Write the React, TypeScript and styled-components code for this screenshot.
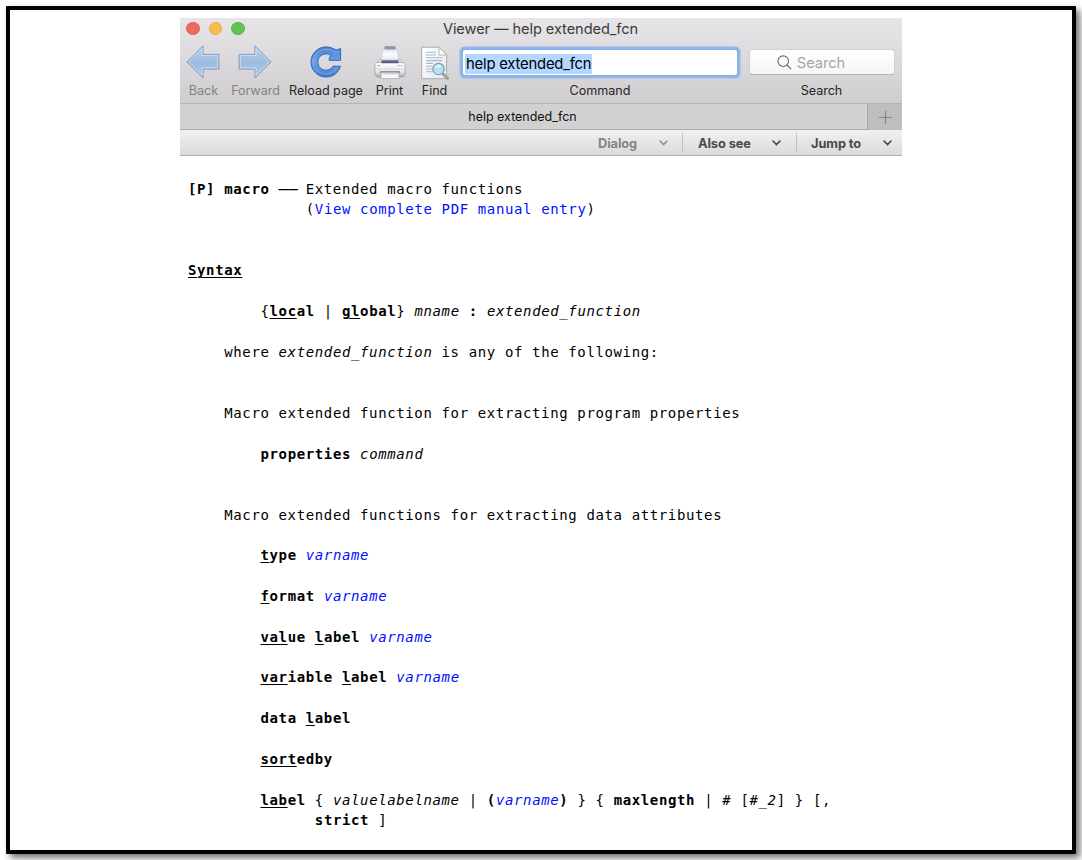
import React from "react";
import styled, { createGlobalStyle } from "styled-components";

const Global = createGlobalStyle`
  * { box-sizing: border-box; }
  html, body { margin: 0; background: #fff; overflow: hidden; }
`;

const Page = styled.div`
  width: 1082px;
  height: 860px;
  padding: 6px;
`;

const Frame = styled.div`
  width: 1070px;
  height: 848px;
  border: 4px solid #000;
  border-radius: 1px;
  background: #fff;
  box-shadow: 4px 4px 7px rgba(0, 0, 0, 0.55);
  padding: 8px 0 0 170px;
`;

const Window = styled.div`
  width: 722px;
  font-family: Inter, "Liberation Sans", sans-serif;
  color: #262626;
`;

const Chrome = styled.div`
  height: 86px;
  background: linear-gradient(#e7e5e7, #cfcdcf);
  border-bottom: 1px solid #b5b4b5;
`;

const TitleBar = styled.div`
  height: 22px;
  display: grid;
  grid-template-columns: 76px 1fr 76px;
  align-items: center;
`;

const Lights = styled.div`
  display: flex;
  gap: 9px;
  padding: 0 0 1px 6px;
`;

const Light = styled.span<{ $fill: string; $edge: string }>`
  width: 13.6px;
  height: 13.6px;
  border-radius: 50%;
  background: ${(p) => p.$fill};
  border: 1px solid ${(p) => p.$edge};
`;

const Title = styled.div`
  text-align: center;
  font-size: 14.6px;
  letter-spacing: -0.08px;
  padding-right: 1px;
  color: #3b3a3b;
  white-space: nowrap;
`;

const Toolbar = styled.div`
  display: grid;
  grid-template-columns: 47px 57px 84px 43px 47px 284px 159px;
  padding-top: 4px;
`;

const Tool = styled.div`
  display: flex;
  flex-direction: column;
  align-items: center;
`;

const Slot = styled.div<{ $lift?: number; $shift?: number }>`
  height: 38px;
  display: flex;
  align-items: center;
  justify-content: center;
  padding-bottom: ${(p) => p.$lift ?? 0}px;
  padding-right: ${(p) => p.$shift ?? 0}px;
`;

const Label = styled.div<{ $dim?: boolean }>`
  height: 17px;
  line-height: 17px;
  font-size: 12.6px;
  letter-spacing: -0.04px;
  white-space: nowrap;
  color: ${(p) => (p.$dim ? "#838283" : "#262626")};
`;

const CommandField = styled.div`
  width: 274px;
  height: 25px;
  border-radius: 2px;
  background: #fff;
  box-shadow: 0 0 0 1px #84afe6, 0 0 0 3.5px #92b8e9;
  display: flex;
  align-items: center;
  padding: 2px 0 0 2px;
`;

const Selection = styled.span`
  background: #b3d7ff;
  color: #000;
  font-size: 14.8px;
  line-height: 20px;
  letter-spacing: -0.19px;
  padding: 0 1px;
  white-space: nowrap;
`;

const SearchField = styled.div`
  width: 146px;
  height: 26px;
  border-radius: 4px;
  border: 1px solid #d2d1d2;
  border-bottom-color: #b7b6b7;
  background: linear-gradient(#fff, #f5f5f5);
  display: flex;
  align-items: center;
  justify-content: center;
  gap: 5px;
  padding: 1px 21px 0 0;
  font-size: 14.6px;
  color: #a6a6a6;
`;

const TabBar = styled.div`
  height: 26px;
  display: grid;
  grid-template-columns: 687px 35px;
  background: #d1d1d1;
  border-bottom: 1px solid #acacac;
`;

const Tab = styled.div`
  text-align: center;
  line-height: 26px;
  font-size: 12.5px;
  letter-spacing: -0.02px;
  padding-right: 2px;
  color: #111;
`;

const AddTab = styled.div`
  background: #bebebe;
  border-left: 1px solid #a8a8a8;
  display: flex;
  align-items: center;
  justify-content: center;
  padding-left: 1px;
`;

const MenuBar = styled.div`
  height: 26px;
  display: grid;
  grid-template-columns: 401px 101px 114px 106px;
  align-items: center;
  background: linear-gradient(#f0f0f0, #dbdbdb);
  border-bottom: 1px solid #b1b1b1;
`;

const Menu = styled.div<{ $dim?: boolean; $start: number; $end: number }>`
  height: 19px;
  display: flex;
  align-items: center;
  justify-content: space-between;
  padding: 1px ${(p) => p.$end}px 0 ${(p) => p.$start}px;
  border-left: ${(p) => (p.$dim ? "0" : "1px solid #c1c1c1")};
  font-size: 12.8px;
  font-weight: 700;
  letter-spacing: -0.08px;
  color: ${(p) => (p.$dim ? "#858585" : "#4a4a4a")};
`;

const Doc = styled.div`
  padding: 22.8px 0 0 8px;
  font-family: "DejaVu Sans Mono", "Liberation Mono", monospace;
  font-size: 14px;
  letter-spacing: 0.625px;
  line-height: 20.37px;
  color: #000;
`;

const Row = styled.div<{ $col?: number; $gap?: number }>`
  white-space: pre;
  height: 20.37px;
  padding-left: ${(p) => (p.$col ?? 0) * 9.06}px;
  margin-top: ${(p) => (p.$gap ?? 0) * 20.37}px;
`;

const U = styled.span`
  text-decoration: underline;
  text-decoration-thickness: 1px;
  text-underline-offset: 2px;
`;

const Link = styled.span`
  color: #0010ff;
`;

const Dash = styled.span`
  display: inline-block;
  width: 18.12px;
  height: 20px;
  line-height: 22px;
  vertical-align: top;
  letter-spacing: 0;
  font-family: "Liberation Mono", monospace;
  font-size: 16px;
`;

const Arrow = ({ flip, id }: { flip?: boolean; id: string }) => (
  <svg width="36" height="36" viewBox="0 0 36 36">
    <defs>
      <linearGradient id={id} x1="0" y1="0" x2="0" y2="1">
        <stop offset="0" stopColor="#c0d2e8" />
        <stop offset="0.5" stopColor="#9ebbdf" />
        <stop offset="1" stopColor="#aec8e7" />
      </linearGradient>
    </defs>
    <g transform={flip ? "translate(36 0) scale(-1 1)" : undefined}>
      <path d="M2.6 18.8 18.5 2.8V11H34.4V26H18.5V34.8Z" fill="#8b94a2" opacity="0.35" />
      <path d="M2 17.8 18 1.8V10.4H33.8V25H18V34Z" fill={`url(#${id})`} stroke="#7f9fc9" strokeWidth="1" strokeLinejoin="round" />
      <path d="M3.6 17.8 17 4.4V11.5H32.7V23.9H17V31.3Z" fill="none" stroke="#cfdef0" strokeWidth="0.9" />
    </g>
  </svg>
);

const Reload = () => (
  <svg width="34" height="34" viewBox="0 0 34 34">
    <defs>
      <linearGradient id="reload" x1="0" y1="0" x2="0" y2="1">
        <stop offset="0" stopColor="#4b80d2" />
        <stop offset="0.5" stopColor="#6fa1e8" />
        <stop offset="1" stopColor="#4179d0" />
      </linearGradient>
    </defs>
    <path
      d="M27 5.2 31.6 3.6V15.3H20.2V12.4L22.4 11C20.6 9.3 18.6 8.8 16.8 8.9C12 9.1 8.9 12.6 8.9 17C8.9 21.6 12.2 25.2 16.8 25.2C20 25.2 22.6 23.7 24 21.2H31.4C29.6 27.9 24 32 17 32C8.6 32 2 25.4 2 17C2 8.5 8.7 2 17 2C21 2 24.3 3.2 27 5.2Z"
      fill="url(#reload)"
      stroke="#2f66bd"
      strokeWidth="1"
      strokeLinejoin="round"
    />
    <path d="M4.4 19.5C3.4 10 10.3 4.4 17 4.4C21 4.4 24.6 5.6 27 7.8L30.2 6M6.6 23.5C11 30.4 22.4 31.2 28 23.4" fill="none" stroke="#9cc0f2" strokeWidth="1" opacity="0.6" />
  </svg>
);

const Printer = () => (
  <svg width="32" height="35" viewBox="0 0 32 35">
    <defs>
      <linearGradient id="body" x1="0" y1="0" x2="0" y2="1">
        <stop offset="0" stopColor="#fff" />
        <stop offset="0.6" stopColor="#e9eaed" />
        <stop offset="1" stopColor="#a8aaaf" />
      </linearGradient>
      <linearGradient id="slot" x1="0" y1="0" x2="0" y2="1">
        <stop offset="0" stopColor="#8c95a8" />
        <stop offset="1" stopColor="#4a536c" />
      </linearGradient>
      <linearGradient id="sheet" x1="0" y1="0" x2="0" y2="1">
        <stop offset="0" stopColor="#e4e9f3" />
        <stop offset="0.4" stopColor="#f8faff" />
        <stop offset="1" stopColor="#e6ebf6" />
      </linearGradient>
    </defs>
    <path d="M10.5 1.2H21.5V5H10.5Z" fill="#8f96a9" />
    <path d="M5 14.5H27L28.5 18.5H3.5Z" fill="#e0e2e7" stroke="#a7a9b0" strokeWidth="0.5" />
    <path d="M8 13.5H24L25 18H7Z" fill="url(#slot)" />
    <path d="M8.2 4.6H23.8L24.4 15H7.6Z" fill="url(#sheet)" stroke="#b4bac8" strokeWidth="0.5" />
    <path d="M4 17.5H28C30.2 17.5 31 19 31 21V29Q31 32 28 32H4Q1 32 1 29V21C1 19 1.8 17.5 4 17.5Z" fill="url(#body)" stroke="#9a9ca2" strokeWidth="0.7" />
    <path d="M7.5 17.6H24.5" stroke="#525b76" strokeWidth="1.3" />
    <path d="M2 24H30" stroke="#c3c5cb" strokeWidth="0.7" />
    <path d="M3.4 20.6H6.2" stroke="#ee9a3c" strokeWidth="1.2" />
    <path d="M23.5 20.6H28.5" stroke="#9b9eaa" strokeWidth="1" strokeDasharray="1 1" />
    <path d="M6 27H26" stroke="#5b5c62" strokeWidth="1.2" />
    <path d="M7.6 27.4H24.4L25.2 33.5H6.8Z" fill="#f7f7f8" stroke="#a9abb0" strokeWidth="0.7" />
    <path d="M8.5 28.8H23.5" stroke="#cccdd1" strokeWidth="1.2" />
  </svg>
);

const FindIcon = () => (
  <svg width="32" height="36" viewBox="0 0 32 36">
    <defs>
      <linearGradient id="paper" x1="0" y1="0" x2="1" y2="1">
        <stop offset="0" stopColor="#fff" />
        <stop offset="1" stopColor="#e6e8eb" />
      </linearGradient>
    </defs>
    <path d="M2.7 2.2H20L27.6 10V33.7H2.7Z" fill="url(#paper)" stroke="#a3a5a9" strokeWidth="0.9" />
    <path d="M20 2.2V10H27.6Z" fill="#fafafa" stroke="#a7a9ad" strokeWidth="0.8" />
    <path d="M7 7.2H17M7 10H17M7 12.8H23.5M7 15.6H23.5M7 18.4H14M7 21.2H13M7 24H13M7 26.8H14" stroke="#a6b8d8" strokeWidth="1.1" />
    <path d="M24 28.8 28.6 33.4" stroke="#85878b" strokeWidth="2.6" strokeLinecap="round" />
    <path d="M24.4 29 28.4 33" stroke="#c2c4c7" strokeWidth="1" strokeLinecap="round" />
    <circle cx="19.5" cy="24" r="5.7" fill="#b3def3" stroke="#8494a0" strokeWidth="1.1" />
    <path d="M15.8 22.5Q18.5 18.5 22.8 21.5Q20 23.5 15.8 22.5Z" fill="#e4f6fd" />
  </svg>
);

const Chevron = ({ color }: { color: string }) => (
  <svg width="9" height="6" viewBox="0 0 9 6">
    <path d="M1 1 4.5 4.5 8 1" fill="none" stroke={color} strokeWidth="1.6" strokeLinecap="round" />
  </svg>
);

const Var = () => <Link><i>varname</i></Link>;

export default function App() {
  return (
    <Page>
      <Global />
      <Frame>
        <Window>
          <Chrome>
            <TitleBar>
              <Lights>
                <Light $fill="#ee6a5f" $edge="#e26056" />
                <Light $fill="#f6be4f" $edge="#e5ae45" />
                <Light $fill="#5fc454" $edge="#54b449" />
              </Lights>
              <Title>Viewer — help extended_fcn</Title>
            </TitleBar>
            <Toolbar>
              <Tool><Slot $lift={2} $shift={1}><Arrow id="back" /></Slot><Label $dim>Back</Label></Tool>
              <Tool><Slot $lift={2} $shift={1}><Arrow id="forward" flip /></Slot><Label $dim>Forward</Label></Tool>
              <Tool><Slot $lift={2}><Reload /></Slot><Label>Reload page</Label></Tool>
              <Tool><Slot $lift={2}><Printer /></Slot><Label>Print</Label></Tool>
              <Tool><Slot><FindIcon /></Slot><Label>Find</Label></Tool>
              <Tool>
                <Slot $lift={1}><CommandField><Selection>help extended_fcn</Selection></CommandField></Slot>
                <Label>Command</Label>
              </Tool>
              <Tool>
                <Slot $lift={2}>
                  <SearchField>
                    <svg width="15" height="15" viewBox="0 0 15 15">
                      <circle cx="6.2" cy="6.2" r="5.3" fill="none" stroke="#6c6c6c" strokeWidth="1.1" />
                      <path d="M10 10 14.2 14.2" stroke="#6c6c6c" strokeWidth="1.2" />
                    </svg>
                    Search
                  </SearchField>
                </Slot>
                <Label>Search</Label>
              </Tool>
            </Toolbar>
          </Chrome>
          <TabBar>
            <Tab>help extended_fcn</Tab>
            <AddTab>
              <svg width="13" height="13" viewBox="0 0 13 13">
                <path d="M6.5 0V13M0 6.5H13" stroke="#858585" strokeWidth="1.1" />
              </svg>
            </AddTab>
          </TabBar>
          <MenuBar>
            <span />
            <Menu $dim $start={17} $end={14}>Dialog<Chevron color="#929292" /></Menu>
            <Menu $start={15} $end={15}>Also see<Chevron color="#484848" /></Menu>
            <Menu $start={14} $end={10}>Jump to<Chevron color="#484848" /></Menu>
          </MenuBar>
        </Window>
        <Doc>
          <Row><b>[P] macro</b> <Dash>——</Dash> Extended macro functions</Row>
          <Row $col={13}>(<Link>View complete PDF manual entry</Link>)</Row>
          <Row $gap={2}><b><U>Syntax</U></b></Row>
          <Row $gap={1} $col={8}>{"{"}<b><U>loc</U>al</b> | <b><U>gl</U>obal</b>{"} "}<i>mname</i> <b>:</b> <i>extended_function</i></Row>
          <Row $gap={1} $col={4}>where <i>extended_function</i> is any of the following:</Row>
          <Row $gap={2} $col={4}>Macro extended function for extracting program properties</Row>
          <Row $gap={1} $col={8}><b>properties</b> <i>command</i></Row>
          <Row $gap={2} $col={4}>Macro extended functions for extracting data attributes</Row>
          <Row $gap={1} $col={8}><b><U>t</U>ype</b> <Var /></Row>
          <Row $gap={1} $col={8}><b><U>f</U>ormat</b> <Var /></Row>
          <Row $gap={1} $col={8}><b><U>val</U>ue <U>l</U>abel</b> <Var /></Row>
          <Row $gap={1} $col={8}><b><U>var</U>iable <U>l</U>abel</b> <Var /></Row>
          <Row $gap={1} $col={8}><b>data <U>l</U>abel</b></Row>
          <Row $gap={1} $col={8}><b><U>sort</U>edby</b></Row>
          <Row $gap={1} $col={8}><b><U>lab</U>el</b>{" { "}<i>valuelabelname</i> | <b>(</b><Var /><b>)</b>{" } { "}<b>maxlength</b> | <i>#</i> [<i>#_2</i>]{" } [,"}</Row>
          <Row $col={14}><b>strict</b> ]</Row>
        </Doc>
      </Frame>
    </Page>
  );
}
